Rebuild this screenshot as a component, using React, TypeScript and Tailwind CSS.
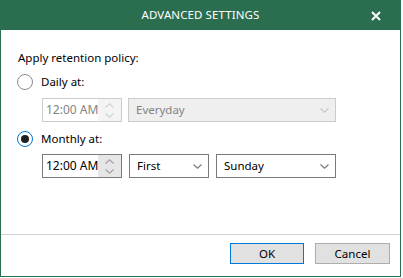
import React from 'react';

const font = { fontFamily: '"Noto Sans", "Segoe UI", sans-serif' };

const Chevron = ({ up, color }: { up?: boolean; color: string }) => (
  <svg width="9" height="5" viewBox="0 0 9 5" fill="none">
    <path
      d={up ? 'M0.5 4.5L4.5 0.8L8.5 4.5' : 'M0.5 0.5L4.5 4.2L8.5 0.5'}
      stroke={color}
      strokeWidth="1.2"
    />
  </svg>
);

const Radio = ({ checked }: { checked?: boolean }) => (
  <div
    className={
      'w-4 h-4 rounded-full border flex items-center justify-center bg-white ' +
      (checked ? 'border-[#0078d7]' : 'border-[#8c8c8c]')
    }
  >
    {checked && <div className="w-2 h-2 rounded-full bg-[#1f1f1f]" />}
  </div>
);

const TimeBox = ({ disabled }: { disabled?: boolean }) => (
  <div
    className={
      'flex h-[24px] w-[80px] border ' +
      (disabled ? 'border-[#cccccc]' : 'border-[#7a7a7a]')
    }
  >
    <div
      className={
        'w-[55px] overflow-hidden whitespace-nowrap pl-[3px] text-[12px] leading-[22px] bg-white ' +
        (disabled ? 'text-[#838383]' : 'text-[#000000]')
      }
    >
      12:00 AM
    </div>
    <div
      className={
        'flex-1 flex flex-col items-center justify-center gap-[5px] ' +
        (disabled ? 'bg-[#f4f4f4]' : 'bg-[#e6e6e6]')
      }
    >
      <Chevron up color={disabled ? '#d2d2d2' : '#a3a3a3'} />
      <Chevron color={disabled ? '#d2d2d2' : '#a3a3a3'} />
    </div>
  </div>
);

const Select = ({
  value,
  width,
  disabled,
}: {
  value: string;
  width: string;
  disabled?: boolean;
}) => (
  <div
    className={
      'flex items-center justify-between h-[24px] border pl-[7px] pr-[6px] text-[11.5px] ' +
      width +
      (disabled
        ? ' border-[#cccccc] bg-[#efefef] text-[#838383]'
        : ' border-[#7a7a7a] bg-white text-[#000000]')
    }
  >
    <span>{value}</span>
    <Chevron color={disabled ? '#c8c8c8' : '#7a7a7a'} />
  </div>
);

const App = () => {
  return (
    <div className="w-[403px] h-[278px] bg-white" style={font}>
      <div className="w-[401px] h-[277px] flex flex-col border-l border-r border-b border-[#2b6d4f]">
        <div className="h-[30px] -mx-px bg-[#2b6d4f] flex items-center relative">
          <div className="flex-1 text-center text-white text-[11.5px] tracking-[0.1px]">
            ADVANCED SETTINGS
          </div>
          <svg
            className="absolute right-[20px] top-[11px]"
            width="10"
            height="10"
            viewBox="0 0 10 10"
          >
            <path d="M1 1L9 9M9 1L1 9" stroke="white" strokeWidth="2" />
          </svg>
        </div>

        <div className="flex-1 pl-[16px] pt-[20px] text-[11.5px] text-[#000000]">
          <div className="leading-[16px] pl-[1px]">Apply retention policy:</div>

          <div className="flex items-center gap-[8px] mt-[8px] h-[16px]">
            <Radio />
            <span className="leading-[16px]">Daily at:</span>
          </div>
          <div className="flex gap-[6px] mt-[8px] pl-[25px]">
            <TimeBox disabled />
            <Select value="Everyday" width="w-[208px]" disabled />
          </div>

          <div className="flex items-center gap-[8px] mt-[9px] h-[16px]">
            <Radio checked />
            <span className="leading-[16px]">Monthly at:</span>
          </div>
          <div className="flex gap-[7px] mt-[7px] pl-[25px]">
            <TimeBox />
            <Select value="First" width="w-[80px]" />
            <Select value="Sunday" width="w-[120px]" />
          </div>
        </div>

        <div className="h-[42px] border-t border-[#d0d0d0] flex justify-end items-start pt-[8px] pr-[10px] gap-[11px]">
          <button className="w-[74px] h-[21px] border border-[#0078d7] bg-[#e1e1e1] text-[11.5px] text-[#000000]">
            OK
          </button>
          <button className="w-[75px] h-[21px] border border-[#adadad] bg-[#e1e1e1] text-[11.5px] text-[#000000]">
            Cancel
          </button>
        </div>
      </div>
    </div>
  );
};

export default App;
